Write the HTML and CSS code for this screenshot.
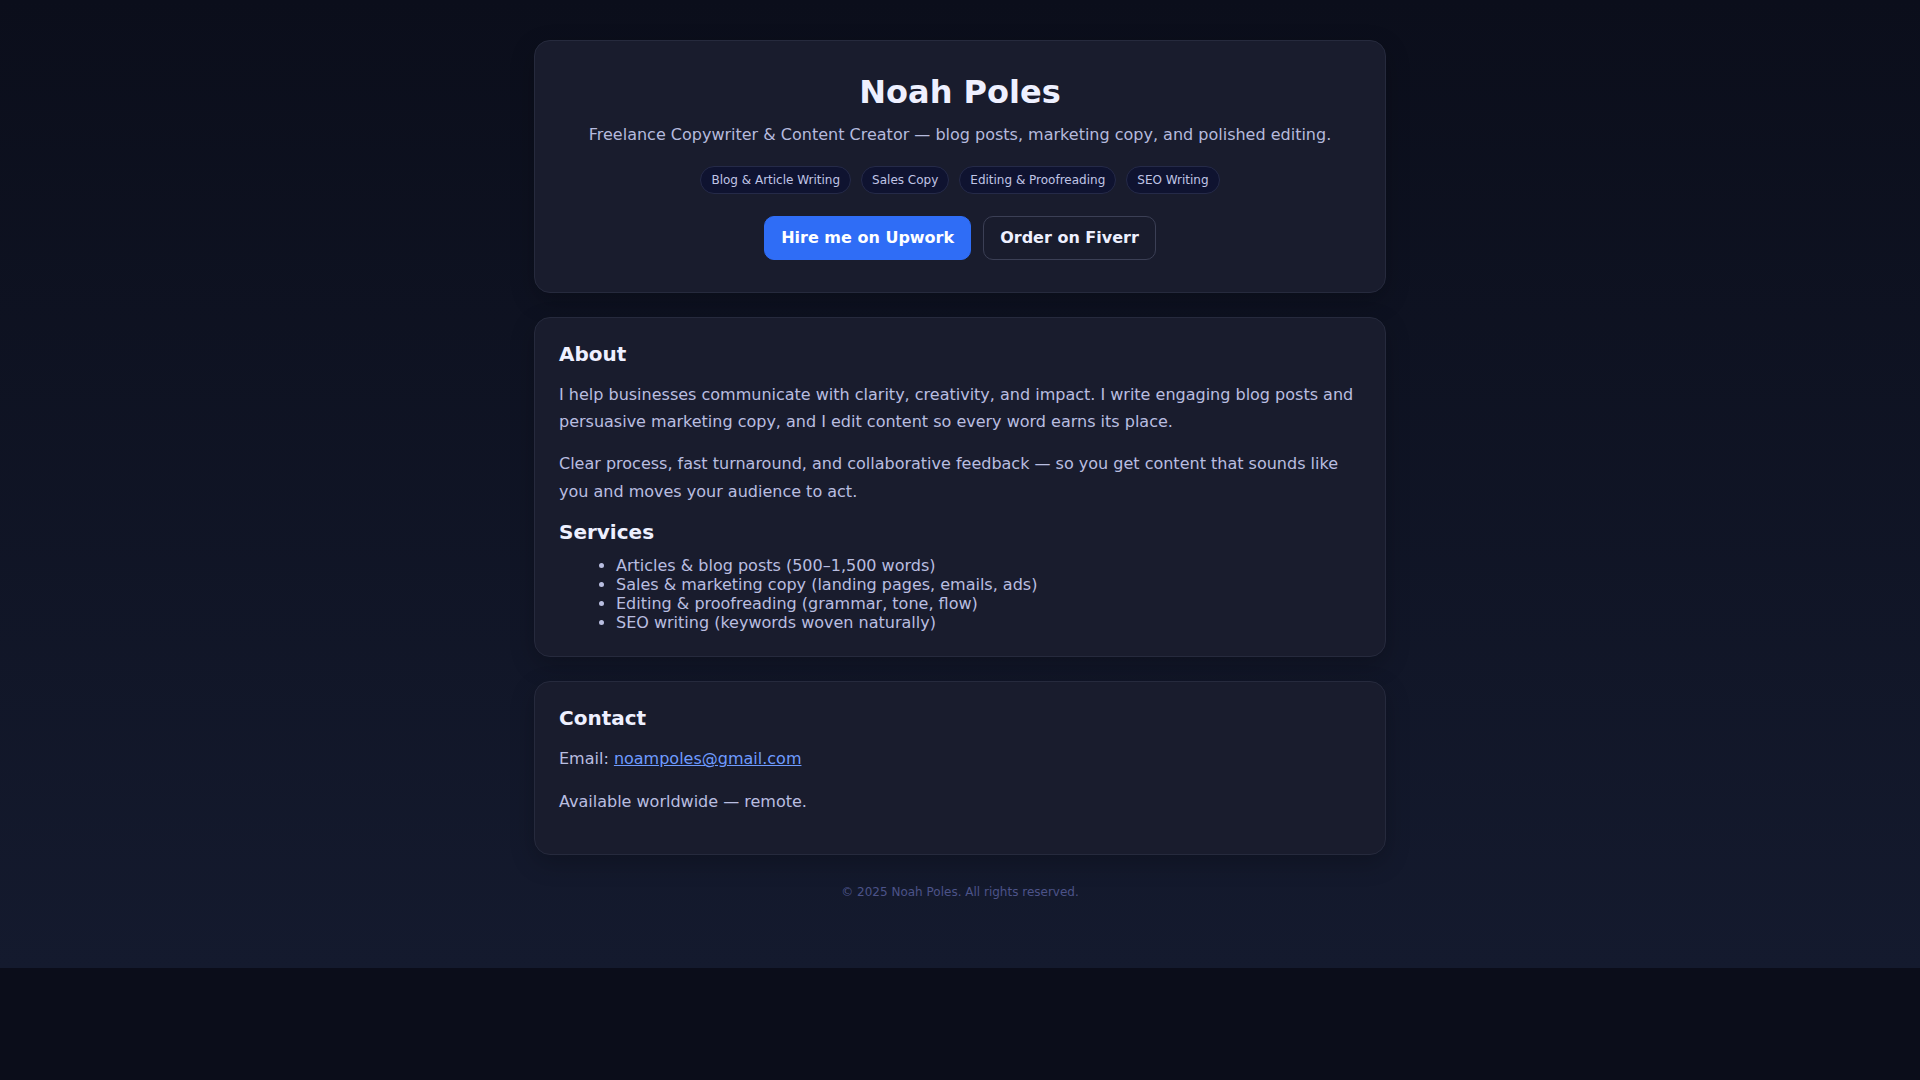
FILE: index.html
```html
<!DOCTYPE html>
<html lang="en">
<head>
<meta charset="utf-8">
<title>Noah Poles — Freelance Copywriter</title>
<link rel="stylesheet" href="styles.css">
</head>
<body>
<main class="wrap">
  <header class="card hero">
    <h1 class="name">Noah Poles</h1>
    <p class="tagline">Freelance Copywriter &amp; Content Creator — blog posts, marketing copy, and polished editing.</p>
    <div class="tags">
      <span class="tag">Blog &amp; Article Writing</span>
      <span class="tag">Sales Copy</span>
      <span class="tag">Editing &amp; Proofreading</span>
      <span class="tag">SEO Writing</span>
    </div>
    <div class="actions">
      <a class="btn btn-primary" href="#">Hire me on Upwork</a>
      <a class="btn btn-ghost" href="#">Order on Fiverr</a>
    </div>
  </header>

  <section class="card">
    <h2 class="title">About</h2>
    <p class="text">I help businesses communicate with clarity, creativity, and impact. I write engaging blog posts and persuasive marketing copy, and I edit content so every word earns its place.</p>
    <p class="text">Clear process, fast turnaround, and collaborative feedback — so you get content that sounds like you and moves your audience to act.</p>
    <h2 class="title">Services</h2>
    <ul class="list">
      <li>Articles &amp; blog posts (500–1,500 words)</li>
      <li>Sales &amp; marketing copy (landing pages, emails, ads)</li>
      <li>Editing &amp; proofreading (grammar, tone, flow)</li>
      <li>SEO writing (keywords woven naturally)</li>
    </ul>
  </section>

  <section class="card">
    <h2 class="title">Contact</h2>
    <p class="text">Email: <a class="link" href="#">noampoles@gmail.com</a></p>
    <p class="text">Available worldwide — remote.</p>
  </section>

  <footer class="footer">© 2025 Noah Poles. All rights reserved.</footer>
</main>
</body>
</html>
```

FILE: styles.css
```css
html {
  background: #0b0d1a;
}
body {
  margin: 0;
  padding: 40px 16px 40px;
  font-family: "DejaVu Sans", sans-serif;
  font-size: 16px;
  line-height: 1.7;
  color: #b9bee0;
  background: linear-gradient(180deg, #0b0e1b 0%, #141a2e 100%);
}
.wrap {
  max-width: 852px;
  margin: 0 auto;
  display: flex;
  flex-direction: column;
  gap: 24px;
}
.card {
  background: #191c2d;
  border: 1px solid #262a3d;
  border-radius: 16px;
  padding: 24px;
  box-shadow: 0 8px 24px rgba(0, 0, 0, 0.22);
}
.hero {
  padding: 32px 24px;
  text-align: center;
}
.name {
  margin: 0 0 10px;
  font-size: 32px;
  line-height: 1.2;
  font-weight: 700;
  color: #eef0ff;
}
.tagline {
  margin: 0 0 17px;
  color: #b5badd;
}
.tags {
  display: flex;
  justify-content: center;
  flex-wrap: wrap;
  gap: 10px;
  margin-bottom: 22px;
}
.tag {
  font-size: 12px;
  padding: 3px 10px;
  border-radius: 999px;
  background: #0f1330;
  border: 1px solid #252a48;
  color: #c0c5e6;
}
.actions {
  display: flex;
  justify-content: center;
  gap: 12px;
}
.btn {
  display: inline-block;
  padding: 12px 16px;
  line-height: 18px;
  font-size: 16px;
  font-weight: 700;
  border-radius: 10px;
  text-decoration: none;
  border: 1px solid transparent;
}
.btn-primary {
  background: #2f6df6;
  color: #ffffff;
  border-color: #2f6df6;
}
.btn-ghost {
  background: transparent;
  color: #eef0ff;
  border-color: #3b3f55;
}
.title {
  margin: 0 0 12px;
  font-size: 20px;
  line-height: 1.2;
  font-weight: 700;
  color: #eef0ff;
}
.text {
  margin: 15px 0;
}
.list {
  margin: 0;
  padding-left: 57px;
  line-height: 1.2;
}
.link {
  color: #6f9bff;
  text-decoration: underline;
}
.footer {
  text-align: center;
  font-size: 12px;
  color: #4c5389;
  padding: 3px 0 26px;
}
```
